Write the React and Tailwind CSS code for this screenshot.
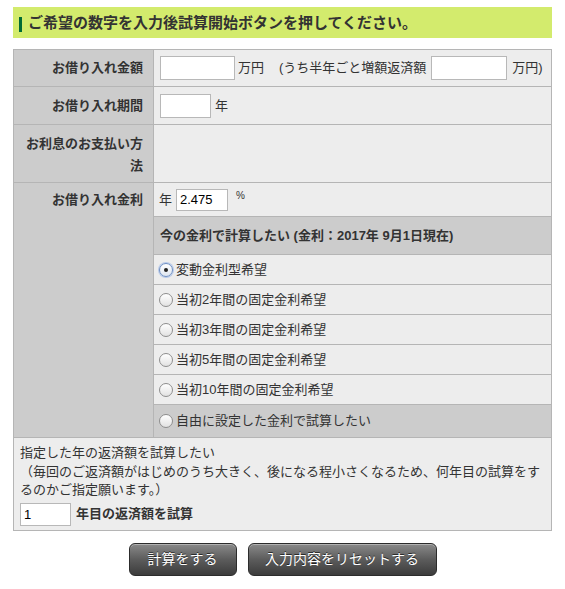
import React from "react";

function Radio({ checked }) {
  if (checked) {
    return (
      <span className="relative inline-flex h-[14px] w-[14px] shrink-0 items-center justify-center rounded-full border border-[#6e8fc4] bg-gradient-to-b from-white to-[#dfe6f0] shadow-[0_0_0_1px_rgba(120,160,230,0.45)]">
        <span className="h-[4px] w-[4px] rounded-full bg-[#222]" />
      </span>
    );
  }
  return (
    <span className="inline-flex h-[14px] w-[14px] shrink-0 rounded-full border border-[#8e8e8e] bg-gradient-to-b from-white to-[#e2e2e2]" />
  );
}

function RadioRow({ label, checked, last }) {
  if (last) {
    return (
      <div className="flex h-[32px] items-center bg-[#cccccc] pl-[5px]">
        <Radio checked={checked} />
        <span className="ml-[3px] text-[13px] leading-[18px] text-[#333]">{label}</span>
      </div>
    );
  }
  return (
    <div className="flex h-[30px] items-center border-b border-[#b5b5b5] pl-[5px]">
      <Radio checked={checked} />
      <span className="ml-[3px] text-[13px] leading-[18px] text-[#333]">{label}</span>
    </div>
  );
}

export default function App() {
  return (
    <div className="min-h-[589px] w-[565px] bg-white pt-[7px] font-['Liberation_Sans','Noto_Sans_CJK_JP',sans-serif] text-[#333]">
      <div className="ml-[13px] w-[539px]">
        {/* header */}
        <div className="flex h-[31px] items-center bg-[#d3eb6d] pl-[6px]">
          <span className="mt-[3px] h-[15px] w-[3px] bg-[#006b35]" />
          <span className="ml-[6px] text-[15px] font-bold leading-[20px] text-[#333]">
            ご希望の数字を入力後試算開始ボタンを押してください。
          </span>
        </div>

        {/* table */}
        <div className="mt-[11px] border border-[#b5b5b5]">
          {/* row 1 */}
          <div className="flex h-[37px] border-b border-[#b5b5b5]">
            <div className="flex w-[140px] items-center justify-end border-r border-[#b5b5b5] bg-[#cccccc] pr-[10px] text-[13px] font-bold leading-[18px]">
              お借り入れ金額
            </div>
            <div className="flex flex-1 items-center bg-[#ededed] pl-[6px] text-[13px] leading-[18px]">
              <input
                className="h-[24px] w-[75px] border border-[#b8b8b8] bg-white px-[3px] text-[13px] outline-none"
                defaultValue=""
              />
              <span className="ml-[3px]">万円</span>
              <span className="ml-[15px]">(うち半年ごと増額返済額</span>
              <input
                className="ml-[5px] h-[24px] w-[76px] border border-[#b8b8b8] bg-white px-[3px] text-[13px] outline-none"
                defaultValue=""
              />
              <span className="ml-[5px]">万円)</span>
            </div>
          </div>

          {/* row 2 */}
          <div className="flex h-[38px] border-b border-[#b5b5b5]">
            <div className="flex w-[140px] items-center justify-end border-r border-[#b5b5b5] bg-[#cccccc] pr-[10px] text-[13px] font-bold leading-[18px]">
              お借り入れ期間
            </div>
            <div className="flex flex-1 items-center bg-[#ededed] pl-[6px] text-[13px] leading-[18px]">
              <input
                className="h-[24px] w-[51px] border border-[#b8b8b8] bg-white px-[3px] text-[13px] outline-none"
                defaultValue=""
              />
              <span className="ml-[4px]">年</span>
            </div>
          </div>

          {/* row 3 */}
          <div className="flex h-[58px] border-b border-[#b5b5b5]">
            <div className="flex w-[140px] items-center justify-end border-r border-[#b5b5b5] bg-[#cccccc] pl-[10px] pr-[10px] pt-[3px] text-right text-[13px] font-bold leading-[22px]">
              お利息のお支払い方法
            </div>
            <div className="flex-1 bg-[#ededed]" />
          </div>

          {/* row 4 */}
          <div className="flex">
            <div className="w-[140px] shrink-0 border-r border-[#b5b5b5] bg-[#cccccc]">
              <div className="flex h-[34px] items-center justify-end pr-[10px] text-[13px] font-bold leading-[18px]">
                お借り入れ金利
              </div>
            </div>
            <div className="flex flex-1 flex-col bg-[#ededed]">
              <div className="flex h-[34px] items-center border-b border-[#b5b5b5] pl-[5px] text-[13px] leading-[18px]">
                <span>年</span>
                <input
                  className="ml-[4px] h-[22px] w-[52px] border border-[#b8b8b8] bg-white px-[3px] text-[13px] text-black outline-none"
                  defaultValue="2.475"
                />
                <span className="mb-[8px] ml-[8px] text-[10px] leading-[12px]">%</span>
              </div>
              <div className="flex h-[38px] items-center border-b border-[#b5b5b5] bg-[#cccccc] pl-[6px] text-[13px] font-bold leading-[18px]">
                今の金利で計算したい (金利：2017年 9月1日現在)
              </div>
              <RadioRow label="変動金利型希望" checked />
              <RadioRow label="当初2年間の固定金利希望" />
              <RadioRow label="当初3年間の固定金利希望" />
              <RadioRow label="当初5年間の固定金利希望" />
              <RadioRow label="当初10年間の固定金利希望" />
              <RadioRow label="自由に設定した金利で試算したい" last />
            </div>
          </div>
        </div>

        {/* bottom section */}
        <div className="border-x border-b border-[#b5b5b5] bg-[#ededed] px-[6px] pb-[4px] pt-[6px] text-[13px] leading-[18.5px]">
          <p>指定した年の返済額を試算したい</p>
          <p>（毎回のご返済額がはじめのうち大きく、後になる程小さくなるため、何年目の試算をするのかご指定願います。）</p>
          <div className="mt-[3px] flex items-center">
            <input
              className="h-[23px] w-[51px] border border-[#b8b8b8] bg-white px-[3px] text-[13px] text-black outline-none"
              defaultValue="1"
            />
            <span className="ml-[5px] font-bold">年目の返済額を試算</span>
          </div>
        </div>

        {/* buttons */}
        <div className="mt-[12px] flex justify-center gap-[11px]">
          <button className="flex h-[33px] w-[108px] items-center justify-center rounded-[6px] border border-[#2c2c2c] bg-gradient-to-b from-[#8a8a8a] via-[#5c5c5c] to-[#3c3c3c] text-[14px] leading-[18px] text-white shadow-[inset_0_1px_0_rgba(255,255,255,0.35)] [text-shadow:0_-1px_0_rgba(0,0,0,0.6)]">
            計算をする
          </button>
          <button className="flex h-[33px] w-[189px] items-center justify-center rounded-[6px] border border-[#2c2c2c] bg-gradient-to-b from-[#8a8a8a] via-[#5c5c5c] to-[#3c3c3c] text-[14px] leading-[18px] text-white shadow-[inset_0_1px_0_rgba(255,255,255,0.35)] [text-shadow:0_-1px_0_rgba(0,0,0,0.6)]">
            入力内容をリセットする
          </button>
        </div>
      </div>
    </div>
  );
}
